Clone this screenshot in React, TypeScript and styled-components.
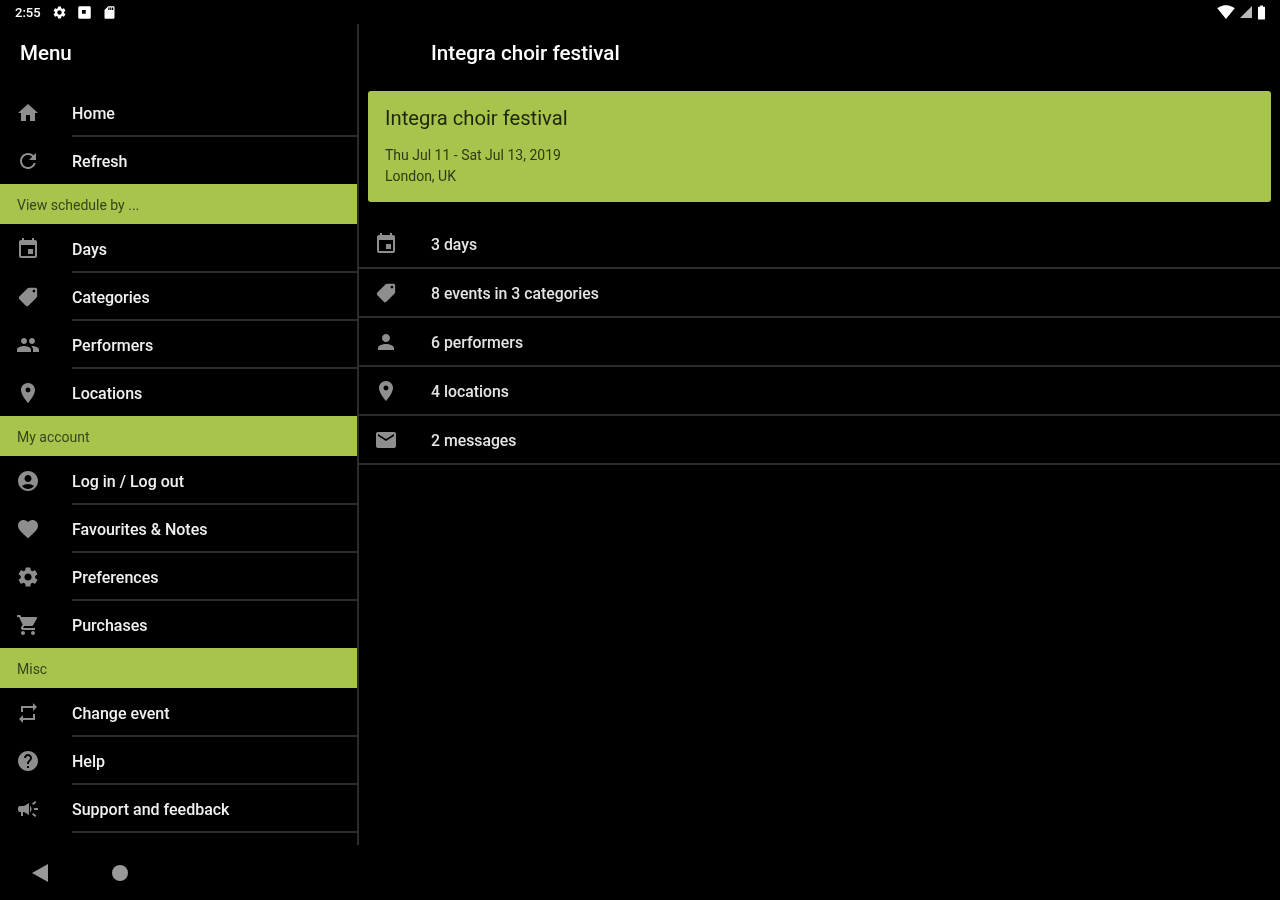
import React, {FC} from 'react';
import styled, {createGlobalStyle} from 'styled-components';
import {IconType} from 'react-icons';
import {
    MdHome, MdRefresh, MdEvent, MdLocalOffer, MdPeople, MdPlace, MdAccountCircle, MdFavorite,
    MdSettings, MdShoppingCart, MdRepeat, MdHelp, MdCampaign, MdPerson, MdEmail, MdSdCard,
    MdSignalWifi4Bar, MdBatteryFull,
} from 'react-icons/md';

interface MenuItem {
    icon: IconType
    label: string
}
interface MenuGroup {
    title?: string
    items: MenuItem[]
}

// the tag in the app points the other way round from the material one
const TagIcon = styled(MdLocalOffer)`
width:22px;
height:22px;
margin:1px;
transform:scaleX(-1);
` as unknown as IconType

const menuGroups: MenuGroup[] = [
    {items: [{icon: MdHome, label: 'Home'}, {icon: MdRefresh, label: 'Refresh'}]},
    {
        title: 'View schedule by ...',
        items: [
            {icon: MdEvent, label: 'Days'},
            {icon: TagIcon, label: 'Categories'},
            {icon: MdPeople, label: 'Performers'},
            {icon: MdPlace, label: 'Locations'},
        ],
    },
    {
        title: 'My account',
        items: [
            {icon: MdAccountCircle, label: 'Log in / Log out'},
            {icon: MdFavorite, label: 'Favourites & Notes'},
            {icon: MdSettings, label: 'Preferences'},
            {icon: MdShoppingCart, label: 'Purchases'},
        ],
    },
    {
        title: 'Misc',
        items: [
            {icon: MdRepeat, label: 'Change event'},
            {icon: MdHelp, label: 'Help'},
            {icon: MdCampaign, label: 'Support and feedback'},
        ],
    },
];

const summary: MenuItem[] = [
    {icon: MdEvent, label: '3 days'},
    {icon: TagIcon, label: '8 events in 3 categories'},
    {icon: MdPerson, label: '6 performers'},
    {icon: MdPlace, label: '4 locations'},
    {icon: MdEmail, label: '2 messages'},
];

const App: FC = () => (
    <Screen>
        <GlobalStyle/>
        <StatusBar>
            <StatusGroup>
                <Time>2:55</Time>
                <MdSettings size={15}/>
                <NoticeIcon viewBox="0 0 12 12">
                    <path fillRule="evenodd" d="M2 1h8a1 1 0 0 1 1 1v8a1 1 0 0 1-1 1H2a1 1 0 0 1-1-1V2a1 1 0 0 1 1-1zm2 3v3h3V4z"/>
                </NoticeIcon>
                <MdSdCard size={15}/>
            </StatusGroup>
            <StatusGroup>
                <MdSignalWifi4Bar size={18}/>
                <SignalIcon viewBox="0 0 12 12"><path d="M12 0v12H0z"/></SignalIcon>
                <Battery><MdBatteryFull size={17}/></Battery>
            </StatusGroup>
        </StatusBar>
        <Body>
            <Sidebar>
                <MenuTitle>Menu</MenuTitle>
                {menuGroups.map((group, g) => (
                    <div key={g}>
                        {group.title && <SectionBar>{group.title}</SectionBar>}
                        {group.items.map(({icon: Icon, label}, i) => (
                            <MenuRow key={label} last={g < menuGroups.length - 1 && i === group.items.length - 1}>
                                <MenuIcon><Icon size={24}/></MenuIcon>
                                <MenuLabel>{label}</MenuLabel>
                            </MenuRow>
                        ))}
                    </div>
                ))}
            </Sidebar>
            <Main>
                <MainTitle>Integra choir festival</MainTitle>
                <EventCard>
                    <CardTitle>Integra choir festival</CardTitle>
                    <CardLine>Thu Jul 11 - Sat Jul 13, 2019</CardLine>
                    <CardLine>London, UK</CardLine>
                </EventCard>
                <SummaryList>
                    {summary.map(({icon: Icon, label}) => (
                        <SummaryRow key={label}>
                            <SummaryIcon><Icon size={24}/></SummaryIcon>
                            <SummaryLabel>{label}</SummaryLabel>
                        </SummaryRow>
                    ))}
                </SummaryList>
            </Main>
        </Body>
        <NavBar>
            <BackIcon viewBox="0 0 16 18"><path d="M16 0v18L0 9z"/></BackIcon>
            <HomeDot/>
        </NavBar>
    </Screen>
);

const GlobalStyle = createGlobalStyle`
html,body{
margin:0;
padding:0;
background:#000;
}
body{
font-family:Roboto,"Liberation Sans",sans-serif;
}
`

const Screen = styled.div`
width:1280px;
height:900px;
overflow:hidden;
display:flex;
flex-direction:column;
background:#000;
filter:blur(0.6px);
`
const StatusBar = styled.div`
height:24px;
flex:none;
display:flex;
justify-content:space-between;
align-items:center;
padding:0 10px 0 15px;
color:#fff;
`
const StatusGroup = styled.div`
display:flex;
align-items:center;
gap:10px;
`
const Time = styled.span`
font-size:13px;
font-weight:500;
margin-right:1px;
`
const NoticeIcon = styled.svg`
width:15px;
height:15px;
fill:#fff;
`
const SignalIcon = styled.svg`
width:12px;
height:12px;
fill:#b8b8b8;
margin-left:-5px;
`
const Battery = styled.span`
display:flex;
margin-left:-9px;
`
const Body = styled.div`
display:flex;
height:821px;
flex:none;
`
const Sidebar = styled.nav`
width:357px;
flex:none;
border-right:2px solid #2c2c2c;
`
const MenuTitle = styled.div`
height:65px;
box-sizing:border-box;
padding:17px 0 0 20px;
font-size:20.5px;
line-height:24px;
font-weight:500;
color:#fff;
`
const SectionBar = styled.div`
height:40px;
box-sizing:border-box;
padding:2px 0 0 17px;
margin:-1px 0 1px;
display:flex;
align-items:center;
background:#a9c44c;
color:#36441a;
font-size:14px;
`
const MenuRow = styled.div<{last?: boolean}>`
height:48px;
display:flex;
align-items:center;
position:relative;
&::after{
content:"";
display:${(props)=>props.last ? "none" : "block"};
position:absolute;
left:72px;
right:0;
bottom:0;
height:2px;
background:#2c2c2c;
}
`
const MenuIcon = styled.span`
width:72px;
flex:none;
display:flex;
padding-left:16px;
box-sizing:border-box;
color:#8e8e8e;
`
const MenuLabel = styled.span`
font-size:16px;
font-weight:500;
color:#f0f0f0;
`
const Main = styled.main`
flex:1;
min-width:0;
`
const MainTitle = styled.div`
height:67px;
box-sizing:border-box;
padding:17px 0 0 72px;
font-size:20.6px;
line-height:24px;
font-weight:500;
color:#fff;
`
const EventCard = styled.section`
margin:0 9px 0 9px;
height:111px;
box-sizing:border-box;
padding:15px 17px;
border-radius:3px;
background:#a9c44c;
color:#2f3a15;
`
const CardTitle = styled.div`
font-size:20.2px;
line-height:25px;
margin-bottom:14px;
color:#1e260c;
`
const CardLine = styled.div`
font-size:14px;
line-height:21px;
`
const SummaryList = styled.div`
margin-top:18px;
`
const SummaryRow = styled.div`
height:47px;
border-bottom:2px solid #2c2c2c;
display:flex;
align-items:center;
`
const SummaryIcon = styled.span`
width:72px;
flex:none;
display:flex;
padding-left:15px;
box-sizing:border-box;
color:#8e8e8e;
`
const SummaryLabel = styled.span`
font-size:15.8px;
font-weight:500;
padding-top:1px;
color:#e4e4e4;
`
const NavBar = styled.div`
flex:1;
display:flex;
align-items:center;
gap:64px;
padding-left:32px;
color:#999;
`
const BackIcon = styled.svg`
width:16px;
height:18px;
fill:#999;
`
const HomeDot = styled.span`
width:16px;
height:16px;
border-radius:50%;
background:#999;
`

export default App;
